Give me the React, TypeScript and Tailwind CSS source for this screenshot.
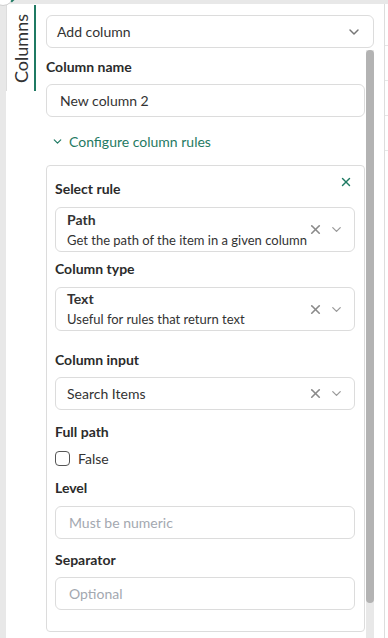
import { ChevronDown, X } from "lucide-react";

function Label({ text, className = "" }: { text: string; className?: string }) {
  return (
    <div className={`h-4 text-[14px] font-bold leading-4 text-[#2b2b2b] ${className}`}>
      {text}
    </div>
  );
}

function SelectBox({
  title,
  sub,
  value,
  className = "",
}: {
  title?: string;
  sub?: string;
  value?: string;
  className?: string;
}) {
  return (
    <div
      className={`flex items-center rounded-md border border-[#dcdcdc] pl-[11px] pr-[10px] ${className}`}
    >
      <div className="flex-1 text-[14px] leading-[20px] text-[#333]">
        {title ? (
          <>
            <div className="font-bold leading-[20px]">{title}</div>
            <div className="text-[13px] leading-[20px]">{sub}</div>
          </>
        ) : (
          <div>{value}</div>
        )}
      </div>
      <X className="h-[15px] w-[15px] text-[#8a8a8a]" strokeWidth={2.6} />
      <ChevronDown className="ml-[6px] h-[15px] w-[15px] text-[#9a9a9a]" strokeWidth={2} />
    </div>
  );
}

function TextInput({ value, placeholder, className = "" }: { value?: string; placeholder?: string; className?: string }) {
  return (
    <div
      className={`flex h-[33px] items-center rounded-md border border-[#dcdcdc] pl-[13px] text-[14px] ${
        value ? "text-[#333]" : "text-[#a3a8b0]"
      } ${className}`}
    >
      {value ?? placeholder}
    </div>
  );
}

export default function App() {
  return (
    <div
      className="relative flex h-[638px] w-[388px] overflow-hidden bg-[#e8e8e8] pl-[6px] pt-[4px]"
      style={{ fontFamily: "Lato, 'Noto Sans', sans-serif" }}
    >
      {/* corner toggle peeking in */}
      <div className="absolute -left-[8px] -top-[16px] h-[22px] w-[22px] rounded-full border border-[#cfcfcf] bg-white">
        <div className="absolute left-[17px] top-[13px] h-[2px] w-[8px] -rotate-45 bg-[#1f7a63]" />
      </div>

      <div className="flex flex-1 bg-white">
        {/* vertical tab */}
        <div className="w-[30px] pt-[1px]">
          <div className="flex h-[86px] w-[30px] items-center justify-center border-l border-r-2 border-l-[#dddddd] border-r-[#1f7a63]">
            <span className="rotate-180 text-[18px] leading-none text-[#333] [writing-mode:vertical-rl]">Columns</span>
          </div>
        </div>

        {/* main column */}
        <div className="flex flex-1 flex-col">
          <div className="pl-[10px] pr-[10px] pt-[11px]">
            <div className="flex h-[33px] items-center rounded-md border border-[#dcdcdc] pl-[10px] pr-[11px] text-[14px] text-[#333]">
              <span className="flex-1">Add column</span>
              <ChevronDown className="h-[16px] w-[16px] text-[#777]" strokeWidth={2.2} />
            </div>
          </div>

          <div className="flex min-h-0 flex-1 pl-[10px] pr-[10px]">
            <div className="flex-1 overflow-hidden pt-[11px]">
              <Label text="Column name" />
              <TextInput value="New column 2" className="mt-[9px] pl-[12px]" />

              <div className="mt-[14px] flex h-5 items-center pl-[5px] text-[14px] text-[#1f7a63]">
                <ChevronDown className="h-[13px] w-[13px]" strokeWidth={2.2} />
                <span className="ml-[5px]">Configure column rules</span>
              </div>

              <div className="relative mt-[14px] rounded border border-[#dcdcdc] pb-[21px] pl-[8px] pr-[9px] pt-[15px]">
                <X className="absolute right-[11px] top-[9px] h-[14px] w-[14px] text-[#1f7a63]" strokeWidth={2.4} />

                <Label text="Select rule" />
                <SelectBox
                  title="Path"
                  sub="Get the path of the item in a given column"
                  className="mt-[10px] h-[45px]"
                />

                <Label text="Column type" className="mt-[9px]" />
                <SelectBox title="Text" sub="Useful for rules that return text" className="mt-[10px] h-[44px]" />

                <Label text="Column input" className="mt-[21px]" />
                <SelectBox value="Search Items" className="mt-[9px] h-[33px]" />

                <Label text="Full path" className="mt-[14px]" />
                <div className="mt-[8px] flex h-5 items-center text-[14px] text-[#333]">
                  <div className="h-[15px] w-[15px] rounded-[4px] border border-[#555]" />
                  <span className="ml-[8px]">False</span>
                </div>

                <Label text="Level" className="mt-[12px]" />
                <TextInput placeholder="Must be numeric" className="mt-[10px]" />

                <Label text="Separator" className="mt-[13px]" />
                <TextInput placeholder="Optional" className="mt-[9px]" />
              </div>
            </div>

            {/* scrollbar */}
            <div className="ml-[1px] mt-[2px] w-[8px] bg-[#e8e8e8]">
              <div className="h-[553px] rounded-full bg-[#b3b3b3]" />
            </div>
          </div>
        </div>
      </div>

      {/* neighbouring table edge */}
      <div className="flex w-[4px] flex-col border-l border-[#dddddd] bg-white">
        <div className="h-[41px]" />
        <div className="h-[35px] border-t border-[#e6e6e6]" />
        <div className="h-[35px] border-t border-[#e6e6e6]" />
        <div className="h-[35px] border-t border-[#e6e6e6]" />
        <div className="h-[35px] border-t border-[#e6e6e6]" />
      </div>
    </div>
  );
}
